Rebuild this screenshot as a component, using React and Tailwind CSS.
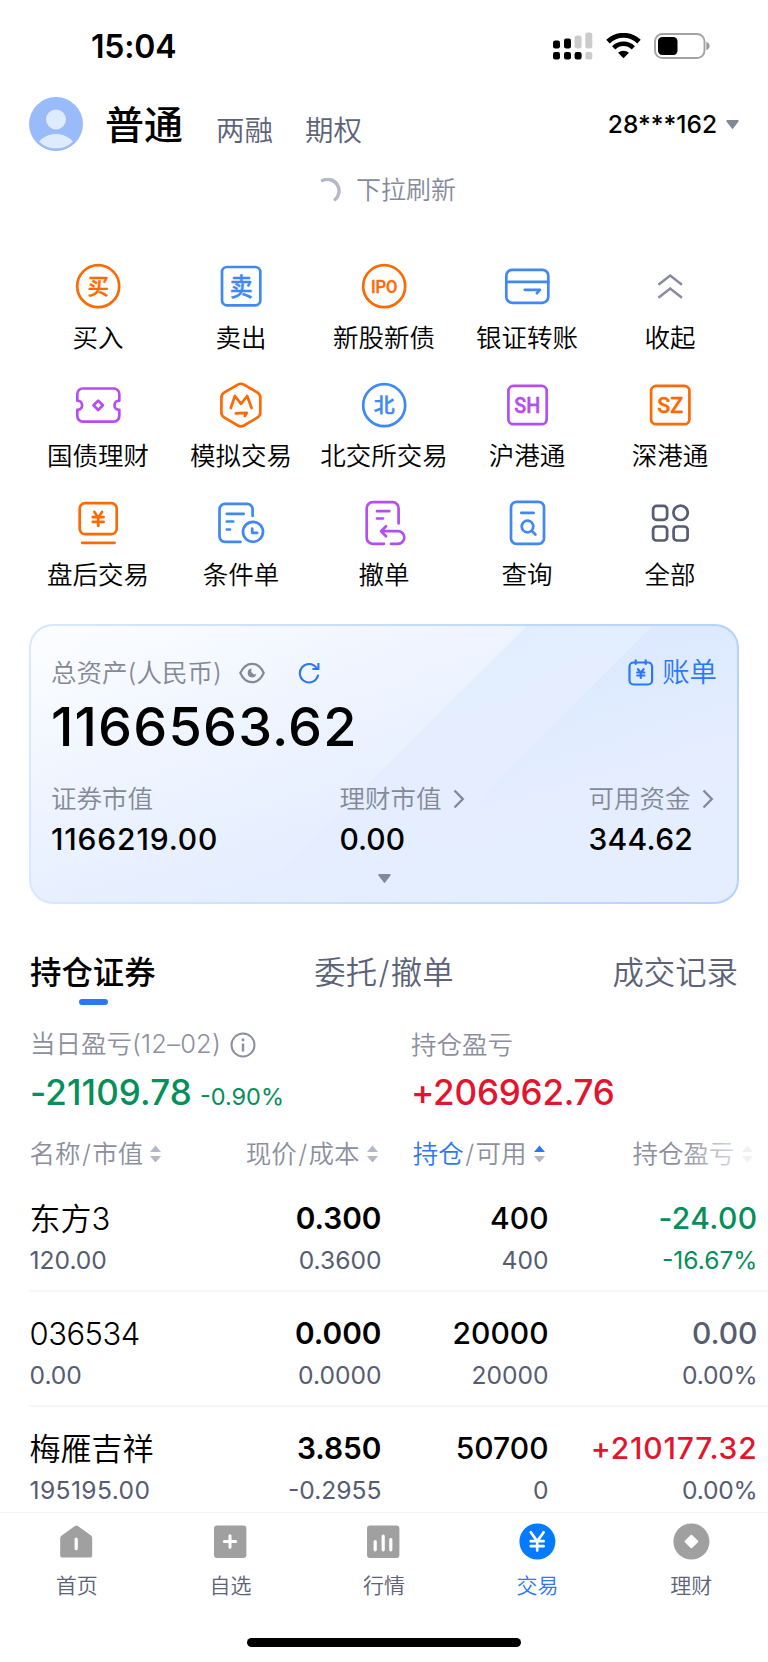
import { clsx } from 'clsx'

const ORANGE = '#fb6a05'
const BLUE = '#4088f4'
const PURPLE = '#b44df2'
const SLATE = '#565c72'

function GridIcon({ color, children }) {
  return (
    <svg
      viewBox="0 0 48 48"
      className="size-12"
      fill="none"
      stroke={color}
      strokeWidth="2.7"
      strokeLinecap="round"
      strokeLinejoin="round"
    >
      {children}
    </svg>
  )
}

function IconText({ color, size, width, y, children, weight = 500, family = 'Noto Sans CJK SC' }) {
  return (
    <text
      x={24.2 - width / 2}
      y={y}
      fill={color}
      stroke={color}
      strokeWidth="0.4"
      fontSize={size}
      fontWeight={weight}
      fontFamily={`"${family}", sans-serif`}
      textLength={width}
      lengthAdjust="spacingAndGlyphs"
    >
      {children}
    </text>
  )
}

const shortcuts = [
  {
    label: '买入',
    icon: (
      <GridIcon color={ORANGE}>
        <circle cx="24.2" cy="24.2" r="21" />
        <IconText color={ORANGE} size={21.5} width={21.5} y={32}>买</IconText>
      </GridIcon>
    ),
  },
  {
    label: '卖出',
    icon: (
      <GridIcon color={BLUE}>
        <rect x="5" y="5" width="38.3" height="38.3" rx="5" />
        <IconText color={BLUE} size={25} width={23} y={33.6}>卖</IconText>
      </GridIcon>
    ),
  },
  {
    label: '新股新债',
    icon: (
      <GridIcon color={ORANGE}>
        <circle cx="24.2" cy="24.2" r="21" />
        <IconText color={ORANGE} size={18} width={26.5} y={30.5} family="Roboto">IPO</IconText>
      </GridIcon>
    ),
  },
  {
    label: '银证转账',
    icon: (
      <GridIcon color={BLUE}>
        <rect x="3.3" y="7.8" width="42" height="33" rx="6" />
        <path d="M3.3 19.9h42M21.7 27.8h15.2l-3 3.4" />
      </GridIcon>
    ),
  },
  {
    label: '收起',
    icon: (
      <GridIcon color="#878b9b">
        <path d="M13.4 22 24.2 13.6 35 22M13.4 35 24.2 26.6 35 35" strokeLinecap="square" strokeLinejoin="miter" strokeWidth="2.4" />
      </GridIcon>
    ),
  },
  {
    label: '国债理财',
    icon: (
      <GridIcon color={PURPLE}>
        <path d="M3.3 13a5.5 5.5 0 0 1 5.5-5.5h31a5.5 5.5 0 0 1 5.5 5.5v6.7c-3 0-4.8 2-4.8 4.6s1.8 4.6 4.8 4.6v6.2a5.5 5.5 0 0 1-5.5 5.5h-31a5.5 5.5 0 0 1-5.5-5.5v-6.2c3 0 4.8-2 4.8-4.6s-1.8-4.6-4.8-4.6z" />
        <path d="m24.2 19.6 4.7 4.7-4.7 4.7-4.7-4.7z" />
      </GridIcon>
    ),
  },
  {
    label: '模拟交易',
    icon: (
      <GridIcon color={ORANGE}>
        <path d="M20.9 3.6Q23.9 1.9 26.9 3.6L40.3 11.4Q43.3 13.2 43.3 16.5V31.6Q43.3 34.9 40.3 36.7L26.9 44.5Q23.9 46.2 20.9 44.5L7.4 36.7Q4.4 34.9 4.4 31.6V16.5Q4.4 13.2 7.4 11.4Z" />
        <path d="M13.8 27 17.9 15 24 22.8 30.2 15 34.6 27M18.8 32.3 29.8 31.8 27.9 35" />
      </GridIcon>
    ),
  },
  {
    label: '北交所交易',
    icon: (
      <GridIcon color={BLUE}>
        <circle cx="24.2" cy="24.2" r="21" />
        <IconText color={BLUE} size={20} width={21} y={31.6}>北</IconText>
      </GridIcon>
    ),
  },
  {
    label: '沪港通',
    icon: (
      <GridIcon color={PURPLE}>
        <rect x="5.4" y="4.9" width="38.3" height="38.3" rx="5" />
        <IconText color={PURPLE} size={21.5} width={26} y={32} family="Roboto">SH</IconText>
      </GridIcon>
    ),
  },
  {
    label: '深港通',
    icon: (
      <GridIcon color={ORANGE}>
        <rect x="5.1" y="4.9" width="38.3" height="38.3" rx="5" />
        <IconText color={ORANGE} size={21.5} width={26} y={32} family="Roboto">SZ</IconText>
      </GridIcon>
    ),
  },
  {
    label: '盘后交易',
    icon: (
      <GridIcon color={ORANGE}>
        <rect x="5.7" y="4.2" width="37" height="31" rx="5.5" />
        <path d="M8.2 43.8h32.4M20.4 12.9l3.8 6 3.8-6M24.2 19v8M18.8 18.2h10.8M18.8 22.9h10.8" />
      </GridIcon>
    ),
  },
  {
    label: '条件单',
    icon: (
      <GridIcon color={BLUE}>
        <path d="M35.6 17V10.4a5.5 5.5 0 0 0-5.5-5.5H8a5.5 5.5 0 0 0-5.5 5.5v27a5.5 5.5 0 0 0 5.5 5.5h15.5M9.8 14.8h16.9M9.8 22.5h6.5M9.8 30.5h3.2" />
        <circle cx="36" cy="32.8" r="10" />
        <path d="M35.2 29.6v4.2h5" />
      </GridIcon>
    ),
  },
  {
    label: '撤单',
    icon: (
      <GridIcon color={PURPLE}>
        <path d="M38.6 24.5V9.2a6 6 0 0 0-6-6H12.7a6 6 0 0 0-6 6v29.6a6 6 0 0 0 6 6H24M17 12.2h12.3M17 19.5h6M26 27.2l-4.9 5 4.9 5M21.5 32.2H38a6.3 6.3 0 0 1 0 12.6h-7" />
      </GridIcon>
    ),
  },
  {
    label: '查询',
    icon: (
      <GridIcon color={BLUE}>
        <rect x="8" y="2.9" width="33" height="42" rx="5.5" />
        <circle cx="24.5" cy="27.5" r="5.8" />
        <path d="M18.3 13.9h12.3M28.8 31.9l3.6 3.6" />
      </GridIcon>
    ),
  },
  {
    label: '全部',
    icon: (
      <GridIcon color={SLATE}>
        <rect x="7.1" y="6.8" width="14" height="14" rx="3.6" />
        <circle cx="34.6" cy="13.8" r="7.2" />
        <rect x="7.1" y="27.5" width="14" height="14" rx="3.6" />
        <rect x="27.6" y="27.5" width="14" height="14" rx="3.6" />
      </GridIcon>
    ),
  },
]

const holdings = [
  { name: '东方3', value: '120.00', price: '0.300', cost: '0.3600', qty: '400', avail: '400', pnl: '-24.00', rate: '-16.67%', pnlClass: 'text-[#068e5b] tracking-[0.4px]', rateClass: 'text-[#068e5b]' },
  { name: '036534', nameClass: 'tracking-[-0.5px]', value: '0.00', price: '0.000', cost: '0.0000', qty: '20000', avail: '20000', pnl: '0.00', rate: '0.00%', pnlClass: 'text-[#565c72]', rateClass: 'tracking-[-0.2px]' },
  { name: '梅雁吉祥', value: '195195.00', valueClass: 'tracking-[0.4px]', price: '3.850', cost: '-0.2955', qty: '50700', avail: '0', pnl: '+210177.32', rate: '0.00%', pnlClass: 'text-[#e3142d] tracking-[0.8px]', rateClass: 'tracking-[-0.2px]' },
]

const navItems = [
  {
    label: '首页',
    icon: (
      <>
        <path d="M3.8 12.6 16.6 3.2a3 3 0 0 1 3.6 0L33 12.6a3 3 0 0 1 1.2 2.4v17a2.6 2.6 0 0 1-2.6 2.6H4.8A2.6 2.6 0 0 1 2.2 32V15a3 3 0 0 1 1.6-2.4z" fill="#a0a0a0" />
        <path d="M18.2 16.2v9.5" stroke="#fff" strokeWidth="3.2" strokeLinecap="round" />
      </>
    ),
  },
  {
    label: '自选',
    icon: (
      <>
        <rect x="2" y="2.5" width="32.4" height="32.4" rx="3" fill="#a0a0a0" />
        <path d="M18 12.8v11.4M12.3 18.5h11.4" stroke="#fff" strokeWidth="3" strokeLinecap="round" />
      </>
    ),
  },
  {
    label: '行情',
    icon: (
      <>
        <rect x="2" y="2.5" width="32.4" height="32.4" rx="3" fill="#a0a0a0" />
        <path d="M10.2 18.5v8.3M18.2 13v13.8M25.8 16.5v10.3" stroke="#fff" strokeWidth="3.2" strokeLinecap="round" />
      </>
    ),
  },
  {
    label: '交易',
    active: true,
    icon: (
      <>
        <circle cx="18.4" cy="18.5" r="18" fill="#047bff" />
        <path d="m11.8 9.3 6.4 9 6.4-9M18.2 18.5v9M11.8 18.2h12.8M11.8 23.2h12.8" stroke="#fff" strokeWidth="2.7" strokeLinecap="round" />
      </>
    ),
  },
  {
    label: '理财',
    icon: (
      <>
        <circle cx="18.4" cy="18.5" r="18" fill="#a0a0a0" />
        <path d="m18.4 12.7 5.8 5.8-5.8 5.8-5.8-5.8z" fill="#fff" stroke="#fff" strokeWidth="2" strokeLinejoin="round" />
      </>
    ),
  },
]

function StatusBar() {
  return (
    <div className="flex h-[92px] items-center justify-between pr-[57px] pl-[91px]">
      <span className="mt-[2px] text-[32px] leading-none font-semibold tracking-[-0.2px]">15:04</span>
      <div className="flex items-center">
        <svg width="40" height="28" viewBox="0 0 40 28" className="mr-[13px]">
          <g fill="#000">
            <rect x="0" y="8.5" width="7" height="8" rx="2.2" />
            <rect x="11" y="6.5" width="7" height="10" rx="2.2" />
            <rect x="0" y="20" width="7" height="7.5" rx="2.2" />
            <rect x="11" y="20" width="7" height="7.5" rx="2.2" />
            <rect x="21.6" y="20" width="7" height="7.5" rx="2.2" />
          </g>
          <g fill="#cbcbcb">
            <rect x="21.6" y="3.5" width="7" height="13" rx="2.2" />
            <rect x="32.3" y="0.5" width="7" height="16" rx="2.2" />
            <rect x="32.3" y="20" width="7" height="7.5" rx="2.2" />
          </g>
        </svg>
        <svg width="35" height="26" viewBox="0 0 35 26" fill="none" className="mr-[13px]">
          <path d="M2 8.6a22.3 22.3 0 0 1 31 0" stroke="#000" strokeWidth="5" />
          <path d="M7.7 14.8a14 14 0 0 1 19.6 0" stroke="#000" strokeWidth="4.6" />
          <path d="M17.5 25.3 12 19.8a8.4 8.4 0 0 1 11 0z" fill="#000" />
        </svg>
        <svg width="57" height="26" viewBox="0 0 57 26">
          <rect x="1" y="1" width="49.5" height="24" rx="7.5" fill="none" stroke="#a3a3a3" strokeWidth="1.9" />
          <rect x="4" y="4" width="19.5" height="18" rx="4.2" />
          <path d="M52.3 9v8c2-.6 3.3-2 3.3-4s-1.3-3.4-3.3-4z" fill="#9a9a9a" />
        </svg>
      </div>
    </div>
  )
}

function Header() {
  return (
    <div className="flex h-16 items-center pr-[29px] pl-[29px]">
      <svg width="54" height="54" viewBox="0 0 54 54" className="shrink-0">
        <circle cx="27" cy="27" r="27" fill="#99bbfa" />
        <circle cx="27" cy="22.5" r="10" fill="#deebfd" />
        <path d="M10 44.4C14.5 39.5 20.5 36.9 27 36.9s12.5 2.6 17 7.5C39.5 48.9 33.5 51.3 27 51.3s-12.5-2.4-17-6.9z" fill="#deebfd" />
      </svg>
      <span className="mt-[2px] ml-[22px] text-[39px] leading-[62px] font-medium">普通</span>
      <span className="mt-[14px] ml-[33px] text-[28.5px] font-[350] text-[#5c6278]">两融</span>
      <span className="mt-[14px] ml-[32px] text-[28.5px] font-[350] text-[#5c6278]">期权</span>
      <span className="mt-px ml-auto text-[24.5px] font-medium">28***162</span>
      <svg width="13" height="9" viewBox="0 0 13 9" className="ml-[9px]">
        <path d="M1.2 0h10.6a.9.9 0 0 1 .7 1.4L7.2 8.5a.9.9 0 0 1-1.4 0L.5 1.4A.9.9 0 0 1 1.2 0z" fill="#828799" />
      </svg>
    </div>
  )
}

function AssetCard() {
  return (
    <div className="mx-[29px] mt-[6.5px] h-[280px] rounded-[24px] bg-linear-to-r from-[#d8e8ff] to-[#b3d2ff] p-[2px]">
      <div className="flex h-full flex-col rounded-[22px] bg-[linear-gradient(166deg,transparent_8%,#e5eeff_72%),linear-gradient(135deg,#fbfdff_0%,#f2f6ff_50.4%,#e0edff_50.5%,#e2eeff_63.2%,#d5e5fe_63.3%,#dceaff_100%)] px-[20px]">
        <div className="mt-[30px] flex h-[34px] items-center">
          <span className="text-[25.5px] font-[350] text-[#858996]">总资产(人民币)</span>
          <svg width="26" height="22" viewBox="0 0 26 22" fill="none" stroke="#858996" strokeWidth="2.2" className="ml-[17px]">
            <path d="M1.3 11C4 5 8 1.8 13 1.8S22 5 24.7 11C22 17 18 20.2 13 20.2S4 17 1.3 11z" strokeLinejoin="round" />
            <path d="M13 6.6a4.4 4.4 0 1 0 4.4 5.4 3.6 3.6 0 0 1-4.4-5.4z" fill="#858996" stroke="none" />
          </svg>
          <svg width="22" height="22" viewBox="0 0 22 22" fill="none" stroke="#2b78f6" strokeWidth="2.1" className="ml-[33px]">
            <path d="M20 13.5A9.2 9.2 0 1 1 18.5 5.8" strokeLinecap="round" />
            <path d="M20.4 1v6h-6" />
          </svg>
          <svg width="26" height="28" viewBox="0 0 26 28" fill="none" stroke="#2b78f6" strokeWidth="2.2" strokeLinecap="round" strokeLinejoin="round" className="ml-auto">
            <rect x="1.5" y="3.5" width="22.6" height="22" rx="4" />
            <path d="M7.7 1.3V5M17.7 1.3V5M10 10.2l2.8 3.5 2.8-3.5M12.8 14v5M9.2 13.5h7.2M9.2 16.5h7.2" />
          </svg>
          <span className="ml-[8px] text-[27.4px] font-[350] text-[#2b78f6]">账单</span>
        </div>
        <div className="mt-[9px] h-[56px] text-[54px] leading-[56px] font-medium tracking-[1.15px]">1166563.62</div>
        <div className="mt-[26px] flex text-[#858996]">
          <Asset label="证券市值" value="1166219.00" className="w-[288.5px]" valueClass="tracking-[0.85px]" />
          <Asset label="理财市值" value="0.00" className="w-[249px]" arrow />
          <Asset label="可用资金" value="344.62" valueClass="tracking-[0.3px]" arrow />
        </div>
        <svg width="13" height="9" viewBox="0 0 13 9" className="mt-[16px] self-center">
          <path d="M1.2 0h10.6a.9.9 0 0 1 .7 1.4L7.2 8.5a.9.9 0 0 1-1.4 0L.5 1.4A.9.9 0 0 1 1.2 0z" fill="#858996" />
        </svg>
      </div>
    </div>
  )
}

function Asset({ label, value, arrow, className, valueClass }) {
  return (
    <div className={clsx('shrink-0', className)}>
      <div className="flex h-[36px] items-center text-[25.5px] leading-[36px] font-[350]">
        {label}
        {arrow && (
          <svg width="12" height="20" viewBox="0 0 12 20" fill="none" stroke="#858996" strokeWidth="2.4" className="ml-[11px]">
            <path d="m1.5 1.5 8.3 8.5-8.3 8.5" />
          </svg>
        )}
      </div>
      <div className={clsx('mt-[2.5px] h-[38px] text-[30px] leading-[38px] font-medium text-black', valueClass)}>{value}</div>
    </div>
  )
}

function SortIcon({ up }) {
  return (
    <svg width="11" height="18" viewBox="0 0 11 18" className="ml-[7px] shrink-0">
      <path d="M5.5.5 11 7H0z" fill={up ? '#2b78f6' : '#b3b8c6'} />
      <path d="M5.5 17.5 11 11H0z" fill="#b3b8c6" />
    </svg>
  )
}

function Slash() {
  return <span className="mx-[1.4px]">/</span>
}

const COLS = 'grid grid-cols-[151px_201px_167px_209px] pl-[29.5px]'

function Holdings() {
  return (
    <div className="h-[380.5px] overflow-hidden">
      <div className={clsx(COLS, 'relative h-[45px] items-center text-[25.5px] font-[350] text-[#8b8f9e]')}>
        <div className="flex items-center whitespace-nowrap">名称<Slash />市值<SortIcon /></div>
        <div className="flex items-center justify-end pr-[4px]">现价<Slash />成本<SortIcon /></div>
        <div className="flex items-center justify-end pr-[4px]">
          <span className="text-[#2b78f6]">持仓</span><Slash />可用<SortIcon up />
        </div>
        <div className="flex items-center justify-end pr-[5px]">持仓盈亏<SortIcon /></div>
        <div className="absolute top-0 right-0 h-full w-[88px] bg-linear-to-r from-white/0 to-white/80 to-75%" />
      </div>
      {holdings.map((h) => (
        <div key={h.name} className="ml-[29px] h-[115px] border-b-2 border-[#f5f6fb]">
          <div className={clsx(COLS, '-ml-[29px] h-[115px] content-start pt-[20.5px] text-[#565c72]')}>
            <span className={clsx('h-[42px] text-[31px] leading-[44px] font-[350] whitespace-nowrap text-black', h.nameClass)}>{h.name}</span>
            <span className="text-right text-[29.8px] leading-[42px] font-semibold text-black">{h.price}</span>
            <span className="text-right text-[30px] leading-[42px] font-medium text-black">{h.qty}</span>
            <span className={clsx('text-right text-[30px] leading-[42px] font-medium', h.pnlClass)}>{h.pnl}</span>
            <span className={clsx('text-[24.6px] leading-[42px]', h.valueClass)}>{h.value}</span>
            <span className="text-right text-[24.6px] leading-[42px]">{h.cost}</span>
            <span className="text-right text-[24.6px] leading-[42px]">{h.avail}</span>
            <span className={clsx('text-right text-[24.6px] leading-[42px]', h.rateClass)}>{h.rate}</span>
          </div>
        </div>
      ))}
    </div>
  )
}

export default function App() {
  return (
    <div className="flex h-[1662px] w-[768px] flex-col overflow-hidden bg-white font-['Inter','Noto_Sans_CJK_SC',sans-serif] text-black">
      <StatusBar />
      <Header />

      <div className="flex h-[69px] items-center pl-[320px] text-[25px] font-[350] text-[#858a9c]">
        <svg width="21" height="25" viewBox="0 0 21 25" fill="none" className="mr-[15px]">
          <path d="M2.5 2.5a11.5 11.5 0 0 1 12.6 19" stroke="#b3b9c8" strokeWidth="3.4" strokeLinecap="round" />
        </svg>
        <span className="mt-px">下拉刷新</span>
      </div>

      <div className="mt-[37px] grid grid-cols-5 px-[26.5px]">
        {shortcuts.map((s) => (
          <div key={s.label} className="flex h-[118.5px] flex-col items-center">
            {s.icon}
            <span className="mt-[9.5px] text-[25.5px] leading-[35px] font-[350] whitespace-nowrap">{s.label}</span>
          </div>
        ))}
      </div>

      <AssetCard />

      <div className="mt-[48px] flex h-[44px] items-center justify-between px-[30px] text-[31.4px] font-[350] text-[#5c6278]">
        <span className="font-medium text-black">持仓证券</span>
        <span>委托<Slash />撤单</span>
        <span>成交记录</span>
      </div>
      <div className="mt-[3px] ml-[79px] h-[6px] w-[29px] rounded-full bg-[#2b78f6]" />

      <div className="mt-[21.5px] flex pl-[30px]">
        <div className="w-[381px]">
          <div className="flex h-[36px] items-center text-[25.5px] font-[350] text-[#8b8f9e]">
            <span>当日盈亏<span className="tracking-[0.2px]">(12–02)</span></span>
            <svg width="26" height="26" viewBox="0 0 26 26" fill="none" stroke="#8b8f9e" strokeWidth="2" className="ml-[9px]">
              <circle cx="13" cy="13" r="11.5" />
              <path d="M13 11.5v8" strokeWidth="2.4" />
              <path d="M13 6.5v2.7" strokeWidth="2.6" />
            </svg>
          </div>
          <div className="mt-[7px] flex h-[44px] items-baseline leading-[44px] text-[#068e5b]">
            <span className="text-[35px] font-medium tracking-[0.1px]">-21109.78</span>
            <span className="ml-[8px] text-[23.5px]">-0.90%</span>
          </div>
        </div>
        <div>
          <div className="h-[36px] text-[25.5px] leading-[36px] font-[350] text-[#8b8f9e]">持仓盈亏</div>
          <div className="mt-[7px] h-[44px] text-[35px] leading-[44px] font-medium tracking-[-0.2px] text-[#e3142d]">+206962.76</div>
        </div>
      </div>

      <div className="mt-[18px]">
        <Holdings />
      </div>

      <div className="flex h-[150px] shrink-0 flex-col border-t border-[#f3f3f5] bg-white">
        <div className="grid grid-cols-5">
          {navItems.map((n) => (
            <div key={n.label} className="flex flex-col items-center pt-[10px]">
              <svg width="37" height="37" viewBox="0 0 37 37" fill="none">{n.icon}</svg>
              <span className={clsx('mt-[11px] text-[21px] leading-[30px] font-[350]', n.active ? 'text-[#2b78f6]' : 'text-[#5c6278]')}>
                {n.label}
              </span>
            </div>
          ))}
        </div>
        <div className="mt-auto mb-[15px] h-[9px] w-[274px] self-center rounded-full bg-black" />
      </div>
    </div>
  )
}
